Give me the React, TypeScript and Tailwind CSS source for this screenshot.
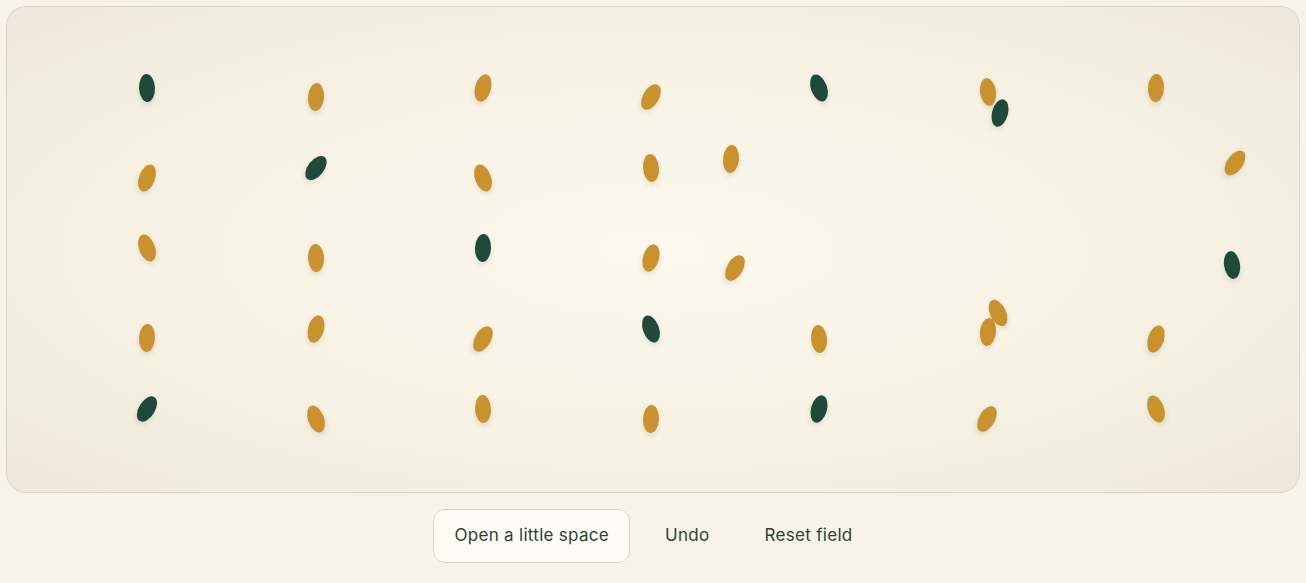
import React from 'react';

type Seed = { x: number; y: number; r: number; g?: boolean };

// centres in page pixels, rotation in degrees
const SEEDS: Seed[] = [
    { x: 147, y: 88, r: -3, g: true },
    { x: 316, y: 97, r: 4 },
    { x: 483, y: 88, r: 15 },
    { x: 651, y: 97, r: 30 },
    { x: 819, y: 88, r: -20, g: true },
    { x: 988, y: 92, r: -8 },
    { x: 1000, y: 113, r: 15, g: true },
    { x: 1156, y: 88, r: 3 },

    { x: 147, y: 178, r: 20 },
    { x: 316, y: 168, r: 38, g: true },
    { x: 483, y: 178, r: -20 },
    { x: 651, y: 168, r: -5 },
    { x: 731, y: 159, r: 5 },
    { x: 1235, y: 163, r: 35 },

    { x: 147, y: 248, r: -20 },
    { x: 316, y: 258, r: -3 },
    { x: 483, y: 248, r: 3, g: true },
    { x: 651, y: 258, r: 15 },
    { x: 735, y: 268, r: 30 },
    { x: 1232, y: 265, r: -8, g: true },

    { x: 147, y: 338, r: 3 },
    { x: 316, y: 329, r: 15 },
    { x: 483, y: 339, r: 30 },
    { x: 651, y: 329, r: -20, g: true },
    { x: 819, y: 339, r: -5 },
    { x: 988, y: 332, r: 6 },
    { x: 998, y: 313, r: -25 },
    { x: 1156, y: 339, r: 18 },

    { x: 147, y: 409, r: 32, g: true },
    { x: 316, y: 419, r: -20 },
    { x: 483, y: 409, r: -3 },
    { x: 651, y: 419, r: 3 },
    { x: 819, y: 409, r: 15, g: true },
    { x: 987, y: 419, r: 30 },
    { x: 1156, y: 409, r: -20 },
];

const SeedDot: React.FC<{ seed: Seed }> = ({ seed }) => (
    <div
        className={`absolute h-[28px] w-[16px] rounded-[50%] shadow-[0_3px_5px_rgba(110,85,40,0.15)] ${seed.g ? 'bg-[#1f4a3b]' : 'bg-[#c9922f]'}`}
        style={{ left: seed.x - 7 - 8, top: seed.y - 7 - 14, transform: `rotate(${seed.r}deg)` }}
    />
);

const App: React.FC = () => {
    return (
        <div className="flex min-h-[583px] flex-col bg-[#f7f3e8] p-[6px] font-['Inter','Noto_Sans',sans-serif]">
            <div className="relative h-[487px] w-full overflow-hidden rounded-[20px] border border-[#ddd5c4] bg-[radial-gradient(ellipse_at_center,#fcf8ec_0%,#f7f2e4_55%,#efe8da_100%)]">
                {SEEDS.map((s, i) => <SeedDot key={i} seed={s} />)}
            </div>
            <div className="mt-[16px] flex items-center justify-center gap-[15px]">
                <button className="h-[54px] rounded-[12px] border border-[#ddd6c6] bg-[#fdfbf4] px-[20px] text-[17px] font-normal tracking-[0.3px] text-[#274537]">
                    Open a little space
                </button>
                <button className="h-[54px] rounded-[12px] px-[20px] text-[17px] font-normal tracking-[0.3px] text-[#274537]">
                    Undo
                </button>
                <button className="h-[54px] rounded-[12px] px-[20px] text-[17px] font-normal tracking-[0.3px] text-[#274537]">
                    Reset field
                </button>
            </div>
        </div>
    );
};

export default App;
